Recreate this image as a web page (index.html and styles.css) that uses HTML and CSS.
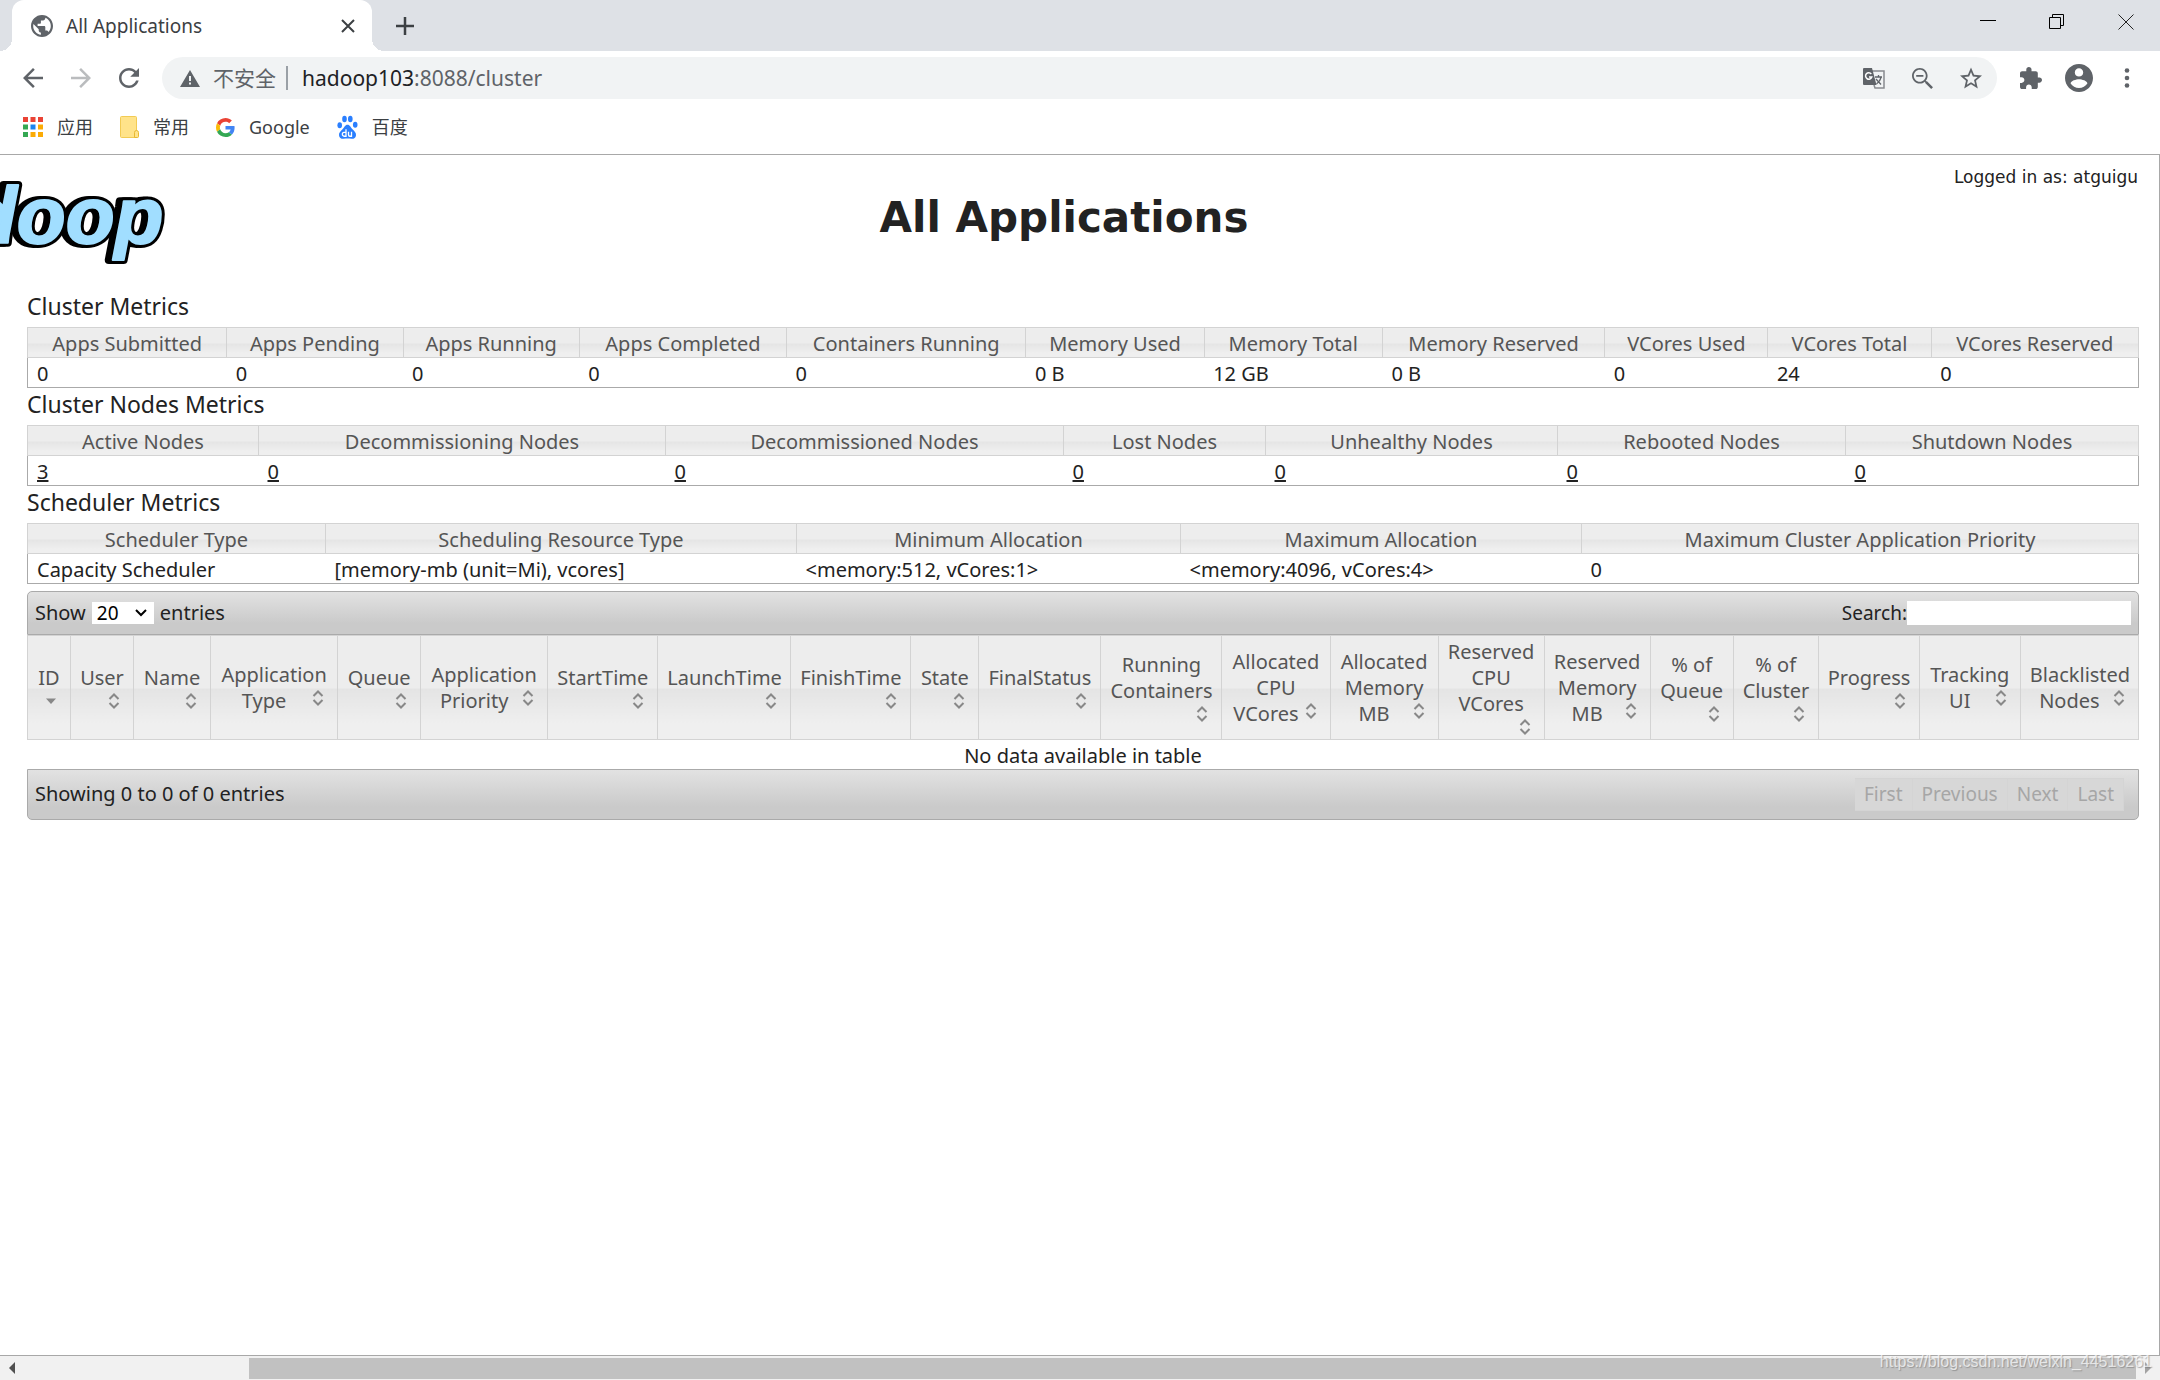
FILE: index.html
```html
<!DOCTYPE html>
<html lang="zh-CN">
<head>
<meta charset="utf-8">
<title>All Applications</title>
<link rel="stylesheet" href="styles.css">
</head>
<body>
<svg class="sprite" aria-hidden="true">
  <symbol id="sort" viewBox="0 0 20 20"><path d="M5.500 8l4.500-4.500 4.500 4.500M5.500 12l4.500 4.500 4.500-4.500" fill="none" stroke="#888" stroke-width="2"/></symbol>
  <symbol id="sort-down" viewBox="0 0 20 20"><path d="M5 7.500h10l-5 5.500z" fill="#888"/></symbol>
</svg>

<div class="tabstrip">
  <div class="tab">
    <svg class="globe" viewBox="2 2 20 20"><path fill="#5f6368" d="M12 2C6.480 2 2 6.480 2 12s4.480 10 10 10 10-4.480 10-10S17.520 2 12 2zm-1 17.930c-3.950-.490-7-3.850-7-7.930 0-.620.080-1.210.210-1.790L9 15v1c0 1.100.900 2 2 2v1.930zm6.900-2.540c-.260-.810-1-1.390-1.900-1.390h-1v-3c0-.550-.450-1-1-1H8v-2h2c.550 0 1-.450 1-1V7h2c1.100 0 2-.900 2-2v-.410c2.930 1.190 5 4.060 5 7.410 0 2.080-.800 3.970-2.100 5.390z"/></svg>
    <span class="tab-title">All Applications</span>
    <button class="icon-btn tab-close" aria-label="Close tab"><svg width="14" height="14" viewBox="0 0 14 14"><path d="M1 1l12 12M13 1L1 13" stroke="#3c4043" stroke-width="2"/></svg></button>
  </div>
  <button class="icon-btn new-tab" aria-label="New tab"><svg width="18" height="18" viewBox="0 0 18 18"><path d="M9 0v18M0 9h18" stroke="#3c4043" stroke-width="2.500"/></svg></button>
  <div class="window-controls">
    <button class="icon-btn" aria-label="Minimize"><svg width="16" height="16" viewBox="0 0 16 16"><path d="M0 6.500h16" stroke="#000"/></svg></button>
    <button class="icon-btn" aria-label="Restore"><svg width="16" height="16" viewBox="0 0 16 16"><path d="M.500 3.500h11v11h-11zM3.500 3.500v-3h11v11h-3" fill="none" stroke="#000"/></svg></button>
    <button class="icon-btn" aria-label="Close"><svg width="16" height="16" viewBox="0 0 16 16"><path d="M.500.500l15 15M15.500.500l-15 15" stroke="#222"/></svg></button>
  </div>
</div>

<div class="toolbar">
  <div class="nav">
    <button class="icon-btn" aria-label="Back"><svg width="20" height="20" viewBox="4 4 16 16"><path fill="#5f6368" d="M20 11H7.830l5.590-5.590L12 4l-8 8 8 8 1.410-1.410L7.830 13H20z"/></svg></button>
    <button class="icon-btn" aria-label="Forward"><svg width="20" height="20" viewBox="4 4 16 16"><path fill="#babcbe" d="M4 11h12.170l-5.590-5.590L12 4l8 8-8 8-1.410-1.410L16.170 13H4z"/></svg></button>
    <button class="icon-btn" aria-label="Reload"><svg width="20" height="20" viewBox="4 4 16 16"><path fill="#5f6368" d="M17.650 6.350C16.200 4.900 14.210 4 12 4c-4.420 0-7.990 3.580-7.990 8s3.570 8 7.990 8c3.730 0 6.840-2.550 7.730-6h-2.080c-.820 2.330-3.040 4-5.650 4-3.310 0-6-2.690-6-6s2.690-6 6-6c1.660 0 3.140.690 4.220 1.780L13 11h7V4z"/></svg></button>
  </div>
  <div class="omnibox">
    <svg width="20" height="17" viewBox="0 0 20 17"><path fill="#5f6368" d="M10 0l10 17H0zM9 6v5h2V6zM9 12.500v2h2v-2z" fill-rule="evenodd"/></svg>
    <span class="insecure">不安全</span>
    <div class="url" role="textbox" contenteditable="true" aria-label="Address" spellcheck="false"><span class="host">hadoop103</span>:8088/cluster</div>
    <button class="icon-btn" aria-label="Translate"><svg width="22" height="22" viewBox="0 0 22 22"><path d="M9 4h12v17H12l-1-3" fill="none" stroke="#888b8f" stroke-width="1.500"/><path d="M1 1h8l4.500 17H1a1 1 0 0 1-1-1V2a1 1 0 0 1 1-1z" fill="#5f6368"/><path d="M8.300 7A3.200 3.200 0 1 0 8.800 10H6" fill="none" stroke="#fff" stroke-width="1.500"/><path d="M12 10h7M15.500 8v2M13 12l5 5.500M18 10.500c-.700 3-2.500 5-4.500 6.500" fill="none" stroke="#5f6368" stroke-width="1.300"/></svg></button>
    <button class="icon-btn" aria-label="Zoom"><svg width="21" height="21" viewBox="3 3 17.500 17.500"><path fill="#5f6368" fill-rule="evenodd" d="M15.500 14h-.790l-.280-.270C15.410 12.590 16 11.110 16 9.500 16 5.910 13.090 3 9.500 3S3 5.910 3 9.500 5.910 16 9.500 16c1.610 0 3.090-.590 4.230-1.570l.270.280v.790l5 4.990L20.490 19zm-6 0.500C6.800 14.500 4.500 12.200 4.500 9.500S6.800 4.500 9.500 4.500 14.500 6.800 14.500 9.500 12.200 14.500 9.500 14.500zM6.500 8.800h6v1.400h-6z"/></svg></button>
    <button class="icon-btn" aria-label="Bookmark"><svg width="22" height="22" viewBox="2 1.500 20 20"><path fill="#5f6368" d="M22 9.240l-7.190-.620L12 2 9.190 8.630 2 9.240l5.460 4.730L5.820 21 12 17.270 18.180 21l-1.630-7.030L22 9.240zM12 15.400l-3.760 2.270 1-4.280-3.320-2.880 4.380-.380L12 6.100l1.710 4.040 4.380.380-3.320 2.880 1 4.280L12 15.400z"/></svg></button>
  </div>
  <div class="actions">
    <button class="icon-btn" aria-label="Extensions"><svg width="22" height="22" viewBox="2 1 21 21"><path fill="#5f6368" d="M20.500 11H19V7c0-1.100-.900-2-2-2h-4V3.500C13 2.120 11.880 1 10.500 1S8 2.120 8 3.500V5H4c-1.100 0-1.990.900-1.990 2v3.800H3.500c1.490 0 2.700 1.210 2.700 2.700s-1.210 2.700-2.700 2.700H2V20c0 1.100.900 2 2 2h3.800v-1.500c0-1.490 1.210-2.700 2.700-2.700 1.490 0 2.700 1.210 2.700 2.700V22H17c1.100 0 2-.900 2-2v-4h1.500c1.380 0 2.500-1.120 2.500-2.500S21.880 11 20.500 11z"/></svg></button>
    <button class="icon-btn" aria-label="Profile"><svg width="28" height="28" viewBox="2 2 20 20"><path fill="#5f6368" d="M12 2C6.480 2 2 6.480 2 12s4.480 10 10 10 10-4.480 10-10S17.520 2 12 2zm0 3c1.660 0 3 1.340 3 3s-1.340 3-3 3-3-1.340-3-3 1.340-3 3-3zm0 14.200c-2.500 0-4.710-1.280-6-3.220.030-1.990 4-3.080 6-3.080 1.990 0 5.970 1.090 6 3.080-1.290 1.940-3.500 3.220-6 3.220z"/></svg></button>
    <button class="icon-btn menu" aria-label="Menu"><svg width="6" height="20" viewBox="0 0 6 20"><g fill="#5f6368"><circle cx="3" cy="2.500" r="2.300"/><circle cx="3" cy="10" r="2.300"/><circle cx="3" cy="17.500" r="2.300"/></g></svg></button>
  </div>
</div>

<nav class="bookmarks">
  <a href="#"><svg width="20" height="20" viewBox="0 0 20 20"><g fill="#ea4335"><path d="M0 0h5v5H0zM7.500 0h5v5h-5zM15 0h5v5h-5z"/></g><path fill="#34a853" d="M0 7.500h5v5H0zM0 15h5v5H0z"/><path fill="#1a84f0" d="M7.500 7.500h5v5h-5z"/><path fill="#fbab05" d="M15 7.500h5v5h-5zM15 15h5v5h-5zM7.500 15h5v5h-5z"/></svg>应用</a>
  <a href="#"><svg width="19" height="22" viewBox="0 0 19 22"><path fill="#ffe38a" stroke="#f2cb54" d="M.500 1.500a1 1 0 0 1 1-1h14a1 1 0 0 1 1 1v19a1 1 0 0 1-1 1h-14a1 1 0 0 1-1-1z"/><path fill="#ffe38a" stroke="#e8b932" d="M14.500 21.500v-5a2 2 0 0 1 4 0v4a1 1 0 0 1-1 1z"/></svg>常用</a>
  <a href="#"><svg width="19" height="19" viewBox="0 0 48 48"><path fill="#ea4335" d="M24 9.500c3.540 0 6.710 1.220 9.210 3.600l6.850-6.850C35.900 2.380 30.470 0 24 0 14.620 0 6.510 5.380 2.560 13.220l7.980 6.190C12.430 13.720 17.740 9.500 24 9.500z"/><path fill="#4285f4" d="M46.980 24.550c0-1.570-.150-3.090-.380-4.550H24v9.020h12.940c-.580 2.960-2.260 5.480-4.780 7.180l7.730 6c4.510-4.180 7.090-10.360 7.090-17.650z"/><path fill="#fbbc05" d="M10.530 28.590c-.480-1.450-.760-2.990-.760-4.590s.270-3.140.760-4.590l-7.980-6.190C.920 16.460 0 20.120 0 24c0 3.880.920 7.540 2.560 10.780z"/><path fill="#34a853" d="M24 48c6.480 0 11.930-2.130 15.890-5.810l-7.730-6c-2.150 1.450-4.920 2.300-8.160 2.300-6.260 0-11.570-4.220-13.470-9.910l-7.980 6.190C6.510 42.620 14.620 48 24 48z"/></svg>Google</a>
  <a href="#"><svg width="21" height="24" viewBox="0 0 21 21" preserveAspectRatio="none"><g fill="#2a7fff"><ellipse cx="2.700" cy="9" rx="2.300" ry="2.600"/><ellipse cx="7.500" cy="3.500" rx="2.300" ry="2.900"/><ellipse cx="13.300" cy="3.500" rx="2.300" ry="2.900"/><ellipse cx="18.200" cy="8.500" rx="2.300" ry="2.600"/><path d="M10.500 8.500c2.500 0 3 2.300 5 4 2.200 1.800 3.700 3.200 3.500 5.200-.300 2.600-2.500 3.300-4.500 3.100-2.500-.300-5.500-.300-8 0-2 .200-4.200-.500-4.500-3.100-.200-2 1.300-3.400 3.500-5.200 2-1.700 2.500-4 5-4z"/></g><path d="M9 12.500v6H7a1.600 1.600 0 0 1 0-3.300h2M11.500 14.700v2.500c0 1 .500 1.300 1.300 1.300h1.700v-3.800" fill="none" stroke="#fff" stroke-width="1.300"/></svg>百度</a>
</nav>

<main class="viewport">
  <header class="header">
    <svg class="logo" width="180" height="100" viewBox="0 0 180 100" role="img" aria-label="hadoop">
      <text class="logo-shadow" x="-36" y="69">doop</text>
      <text class="logo-outline" x="-32" y="69">doop</text>
      <text class="logo-face" x="-32" y="69">doop</text>
    </svg>
    <h1>All Applications</h1>
    <p class="login">Logged in as: atguigu</p>
  </header>

  <section class="content">
    <h3>Cluster Metrics</h3>
    <table class="metrics cluster">
      <thead><tr><th>Apps Submitted</th><th>Apps Pending</th><th>Apps Running</th><th>Apps Completed</th><th>Containers Running</th><th>Memory Used</th><th>Memory Total</th><th>Memory Reserved</th><th>VCores Used</th><th>VCores Total</th><th>VCores Reserved</th></tr></thead>
      <tbody><tr><td>0</td><td>0</td><td>0</td><td>0</td><td>0</td><td>0 B</td><td>12 GB</td><td>0 B</td><td>0</td><td>24</td><td>0</td></tr></tbody>
    </table>

    <h3>Cluster Nodes Metrics</h3>
    <table class="metrics nodes">
      <thead><tr><th>Active Nodes</th><th>Decommissioning Nodes</th><th>Decommissioned Nodes</th><th>Lost Nodes</th><th>Unhealthy Nodes</th><th>Rebooted Nodes</th><th>Shutdown Nodes</th></tr></thead>
      <tbody><tr><td><a href="#">3</a></td><td><a href="#">0</a></td><td><a href="#">0</a></td><td><a href="#">0</a></td><td><a href="#">0</a></td><td><a href="#">0</a></td><td><a href="#">0</a></td></tr></tbody>
    </table>

    <h3>Scheduler Metrics</h3>
    <table class="metrics scheduler">
      <thead><tr><th>Scheduler Type</th><th>Scheduling Resource Type</th><th>Minimum Allocation</th><th>Maximum Allocation</th><th>Maximum Cluster Application Priority</th></tr></thead>
      <tbody><tr><td>Capacity Scheduler</td><td>[memory-mb (unit=Mi), vcores]</td><td>&lt;memory:512, vCores:1&gt;</td><td>&lt;memory:4096, vCores:4&gt;</td><td>0</td></tr></tbody>
    </table>

    <div class="apps">
      <div class="bar bar-top">
        <label class="length">Show
          <span class="select"><select><option>20</option><option>40</option><option>60</option><option>80</option><option>100</option></select><svg width="12" height="8" viewBox="0 0 12 8"><path d="M1 1l5 5 5-5" fill="none" stroke="#000" stroke-width="2"/></svg></span>
          entries</label>
        <label class="search">Search:<input type="text"></label>
      </div>
      <table class="grid">
        <thead><tr>
          <th><div>ID<svg class="below"><use href="#sort-down"/></svg></div></th>
          <th><div>User<svg class="below"><use href="#sort"/></svg></div></th>
          <th><div>Name<svg class="below"><use href="#sort"/></svg></div></th>
          <th><div>Application<br><svg class="beside"><use href="#sort"/></svg>Type</div></th>
          <th><div>Queue<svg class="below"><use href="#sort"/></svg></div></th>
          <th><div>Application<br><svg class="beside"><use href="#sort"/></svg>Priority</div></th>
          <th><div>StartTime<svg class="below"><use href="#sort"/></svg></div></th>
          <th><div>LaunchTime<svg class="below"><use href="#sort"/></svg></div></th>
          <th><div>FinishTime<svg class="below"><use href="#sort"/></svg></div></th>
          <th><div>State<svg class="below"><use href="#sort"/></svg></div></th>
          <th><div>FinalStatus<svg class="below"><use href="#sort"/></svg></div></th>
          <th><div>Running<br>Containers<svg class="below"><use href="#sort"/></svg></div></th>
          <th><div>Allocated<br>CPU<br><svg class="beside"><use href="#sort"/></svg>VCores</div></th>
          <th><div>Allocated<br>Memory<br><svg class="beside"><use href="#sort"/></svg>MB</div></th>
          <th><div>Reserved<br>CPU<br>VCores<svg class="below"><use href="#sort"/></svg></div></th>
          <th><div>Reserved<br>Memory<br><svg class="beside"><use href="#sort"/></svg>MB</div></th>
          <th><div>% of<br>Queue<svg class="below"><use href="#sort"/></svg></div></th>
          <th><div>% of<br>Cluster<svg class="below"><use href="#sort"/></svg></div></th>
          <th><div>Progress<svg class="below"><use href="#sort"/></svg></div></th>
          <th><div>Tracking<br><svg class="beside"><use href="#sort"/></svg>UI</div></th>
          <th><div>Blacklisted<br><svg class="beside"><use href="#sort"/></svg>Nodes</div></th>
        </tr></thead>
        <tbody><tr><td colspan="21">No data available in table</td></tr></tbody>
      </table>
      <div class="bar bar-bottom">
        <span>Showing 0 to 0 of 0 entries</span>
        <div class="pager"><button disabled>First</button><button disabled>Previous</button><button disabled>Next</button><button disabled>Last</button></div>
      </div>
    </div>
  </section>
</main>

<div class="scrollbar">
  <svg width="24" height="24" viewBox="0 0 24 24"><path fill="#505050" d="M9 12l6-6v12z"/></svg>
  <div class="track"><div class="thumb"></div></div>
  <svg width="24" height="24" viewBox="0 0 24 24"><path fill="#a3a3a3" d="M15 12l-6-6v12z"/></svg>
  <span class="watermark">https://blog.csdn.net/weixin_44516261</span>
</div>
</body>
</html>
```
FILE: styles.css
```css
* { box-sizing: border-box; }

body {
  margin: 0;
  min-height: 100vh;
  display: flex;
  flex-direction: column;
  background: #fff;
  color: #222;
  font: 20px/26px "Noto Sans", "Noto Sans CJK SC", sans-serif;
}

svg { display: block; flex: none; }
.sprite { position: absolute; width: 0; height: 0; }
button, input, select { font: inherit; color: inherit; margin: 0; }

.icon-btn {
  display: grid;
  place-items: center;
  padding: 0;
  border: 0;
  background: none;
}

/* Tab strip */
.tabstrip {
  display: flex;
  align-items: center;
  height: 51px;
  padding-left: 12px;
  background: #dee1e6;
}
.tab {
  position: relative;
  display: flex;
  align-items: center;
  align-self: stretch;
  width: 360px;
  padding: 0 17px 0 19px;
  gap: 13px;
  border-radius: 12px 12px 0 0;
  background: #fff;
}
.tab::before, .tab::after {
  content: "";
  position: absolute;
  bottom: 0;
  width: 12px;
  height: 12px;
}
.tab::before { right: 100%; background: radial-gradient(circle at 0 0, #dee1e6 12px, #fff 12px); }
.tab::after { left: 100%; background: radial-gradient(circle at 100% 0, #dee1e6 12px, #fff 12px); }
.globe { width: 22px; height: 22px; }
.tab-title { font-size: 19px; color: #3c4043; }
.tab-close { margin-left: auto; }
.new-tab { margin-left: 24px; }
.window-controls {
  display: flex;
  gap: 53px;
  margin-left: auto;
  padding: 0 26px 8px 0;
}

/* Toolbar */
.toolbar {
  display: flex;
  align-items: center;
  padding: 6px 30px 0 23px;
}
.nav { display: flex; gap: 28px; margin-right: 23px; }
.omnibox {
  flex: 1;
  display: flex;
  align-items: center;
  height: 42px;
  padding: 0 15px 0 18px;
  gap: 27px;
  border-radius: 21px;
  background: #f1f3f4;
  font-size: 21px;
}
.insecure {
  margin-left: -14px;
  padding-right: 10px;
  border-right: 2px solid #9aa0a6;
  line-height: 24px;
  color: #5f6368;
}
.url { flex: 1; margin-left: -13px; color: #5f6368; outline: 0; }
.host { color: #202124; }
.actions { display: flex; align-items: center; gap: 23px; margin-left: 23px; }
.menu { margin-left: 8px; }

/* Bookmarks */
.bookmarks {
  display: flex;
  align-items: center;
  gap: 27px;
  height: 56px;
  padding: 1px 23px 0;
  border-bottom: 1px solid #a8a8a8;
  font-size: 18px;
}
.bookmarks a {
  display: flex;
  align-items: center;
  gap: 14px;
  color: #3c4043;
  text-decoration: none;
}

/* Page */
.viewport {
  flex: 1;
  border: solid #a8a8a8;
  border-width: 0 1px 1px 0;
}
.header {
  display: grid;
  grid-template-columns: 200px 1fr 210px;
  height: 132px;
  padding-right: 21px;
}
.logo { margin-top: 19px; }
.logo text { font: italic bold 80px "Liberation Sans", sans-serif; stroke-linejoin: round; }
.logo .logo-shadow, .logo .logo-outline { fill: #000; stroke: #000; stroke-width: 8px; }
.logo .logo-face { fill: #a1deff; stroke: #a1deff; stroke-width: 2px; }
h1 {
  margin: 37px 0 0;
  font: bold 42px/52px "DejaVu Sans", sans-serif;
  text-align: center;
}
.login {
  margin: 9px 0 0;
  font: 17px/26px "DejaVu Sans", sans-serif;
  text-align: right;
  white-space: nowrap;
}

.content { padding: 0 20px 0 27px; }
h3 {
  margin: 0;
  padding-bottom: 5px;
  font-size: 23px;
  line-height: 32px;
  font-weight: 400;
}
h3:first-child { padding-top: 3px; }

table {
  width: 100%;
  table-layout: fixed;
  border-collapse: collapse;
}
th {
  padding: 0;
  border: 1px solid #d3d3d3;
  background: linear-gradient(#ededed 50%, #e4e4e4 51%, #efefef 85%);
  font-weight: 400;
  color: #555;
  white-space: nowrap;
}
.metrics { border: 1px solid #aaa; }
.metrics th { height: 30px; padding-top: 3px; }
.metrics td { height: 30px; padding: 3px 0 0 9px; white-space: nowrap; }
.metrics a { color: inherit; }

.cluster th:nth-child(1) { width: 199px; }
.cluster th:nth-child(2), .cluster th:nth-child(3) { width: 176px; }
.cluster th:nth-child(4), .cluster th:nth-child(11) { width: 207px; }
.cluster th:nth-child(5) { width: 239px; }
.cluster th:nth-child(6), .cluster th:nth-child(7) { width: 178px; }
.cluster th:nth-child(8) { width: 222px; }
.cluster th:nth-child(9), .cluster th:nth-child(10) { width: 163px; }

.nodes th:nth-child(1) { width: 231px; }
.nodes th:nth-child(2) { width: 407px; }
.nodes th:nth-child(3) { width: 398px; }
.nodes th:nth-child(4) { width: 202px; }
.nodes th:nth-child(5) { width: 292px; }
.nodes th:nth-child(6) { width: 288px; }
.nodes th:nth-child(7) { width: 293px; }

.scheduler th:nth-child(1) { width: 298px; }
.scheduler th:nth-child(2) { width: 471px; }
.scheduler th:nth-child(3) { width: 384px; }
.scheduler th:nth-child(4) { width: 401px; }
.scheduler th:nth-child(5) { width: 557px; }

/* Applications table */
.apps { margin-top: 7px; }
.bar {
  display: flex;
  align-items: center;
  justify-content: space-between;
  padding: 0 7px;
  border: 1px solid #aaa;
  background: linear-gradient(#e2e2e2, #cacaca 75%);
}
.bar-top { height: 44px; border-radius: 5px 5px 0 0; }
.bar-bottom { height: 51px; padding-right: 14px; border-radius: 0 0 5px 5px; }
.length { display: flex; align-items: center; gap: 6px; }
.select { display: grid; align-items: center; }
.select > * { grid-area: 1 / 1; }
.select select {
  width: 62px;
  height: 22px;
  padding: 0 5px;
  border: 0;
  appearance: none;
  background: #fff;
  font-size: 19px;
  line-height: 22px;
  color: #000;
}
.select svg { justify-self: end; margin-right: 7px; pointer-events: none; }
.search { display: flex; align-items: center; font-size: 19px; }
.search input { width: 224px; height: 24px; border: 0; background: #fff; }

.grid th { height: 104px; padding: 0 9px; }
.grid th div { display: flow-root; }
.grid svg { width: 20px; height: 20px; }
.below { margin-left: auto; }
.beside { float: right; }
.grid td { height: 29px; padding: 3px 0 0; text-align: center; line-height: 25px; }

.grid th:nth-child(1) { width: 43px; }
.grid th:nth-child(2) { width: 63px; }
.grid th:nth-child(3) { width: 77px; }
.grid th:nth-child(4), .grid th:nth-child(6) { width: 127px; }
.grid th:nth-child(5) { width: 83px; }
.grid th:nth-child(7) { width: 110px; }
.grid th:nth-child(8) { width: 133px; }
.grid th:nth-child(9) { width: 120px; }
.grid th:nth-child(10) { width: 68px; }
.grid th:nth-child(11) { width: 122px; }
.grid th:nth-child(12) { width: 121px; }
.grid th:nth-child(13), .grid th:nth-child(14) { width: 108px; }
.grid th:nth-child(15), .grid th:nth-child(16) { width: 106px; }
.grid th:nth-child(17) { width: 83px; }
.grid th:nth-child(18) { width: 85px; }
.grid th:nth-child(19), .grid th:nth-child(20) { width: 101px; }
.grid th:nth-child(21) { width: 118px; }

.pager { display: flex; }
.pager button {
  height: 33px;
  padding: 0 9px;
  border: 1px solid #d4d4d4;
  border-left-width: 0;
  background: #d7d7d7;
  font-size: 19px;
  color: #a6a6a6;
}

/* Horizontal scrollbar */
.scrollbar {
  position: relative;
  display: flex;
  height: 24px;
  background: #f1f1f1;
}
.track { flex: 1; padding: 2px 0 1px 225px; }
.thumb { height: 100%; background: #c1c1c1; }
.watermark {
  position: absolute;
  right: 8px;
  top: -6px;
  font: 16px/24px "Liberation Sans", sans-serif;
  color: rgba(255, 255, 255, .7);
  text-shadow: 1px 1px 1px rgba(120, 120, 120, .6);
}
```
